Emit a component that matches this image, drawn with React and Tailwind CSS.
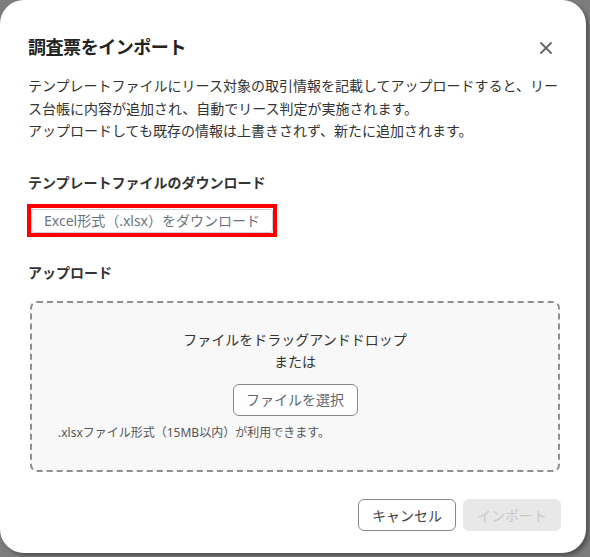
import React from 'react';

const font = { fontFamily: '"Noto Sans", "Noto Sans CJK JP", sans-serif' };

function CloseIcon() {
  return (
    <svg width="14" height="14" viewBox="0 0 14 14" fill="none">
      <path d="M2 2L12 12M12 2L2 12" stroke="#666" strokeWidth="1.8" strokeLinecap="round" />
    </svg>
  );
}

export default function App() {
  return (
    <div className="w-[590px] h-[557px] bg-[#7d7d7d] overflow-hidden" style={font}>
      <div className="w-[586px] h-[553px] bg-white rounded-[24px] shadow-[3px_3px_4px_rgba(0,0,0,0.35)] flex flex-col px-7 pt-[34px] pb-[22px] text-[#333]">
        {/* Header */}
        <div className="flex items-center justify-between h-[26px]">
          <h1 className="text-[18px] font-bold text-[#222] tracking-tight">調査票をインポート</h1>
          <button className="mr-[5px] mt-[2px]"><CloseIcon /></button>
        </div>

        {/* Description */}
        <div className="mt-[15px] text-[14px] leading-[22.5px] text-[#333]">
          <p>テンプレートファイルにリース対象の取引情報を記載してアップロードすると、リース台帳に内容が追加され、自動でリース判定が実施されます。</p>
          <p>アップロードしても既存の情報は上書きされず、新たに追加されます。</p>
        </div>

        {/* Template download */}
        <h2 className="mt-[30px] text-[14px] font-bold text-[#333] leading-[20px]">テンプレートファイルのダウンロード</h2>
        <div className="mt-[11px] self-start ml-[-1px] border-[4px] border-[#ff0000]">
          <button className="h-[24px] px-[12px] border border-[#d0d0d0] rounded-[3px] text-[14px] text-[#6a7480] leading-none bg-white">
            Excel形式（.xlsx）をダウンロード
          </button>
        </div>

        {/* Upload */}
        <h2 className="mt-[26px] text-[14px] font-bold text-[#333] leading-[20px]">アップロード</h2>
        <div className="mt-[18px] ml-[2px] mr-[-2px] h-[171px] border-2 border-dashed border-[#8f8f8f] rounded-[7px] bg-[#f8f8f8] flex flex-col">
          <div className="flex flex-col items-center pt-[26px]">
            <p className="text-[14px] leading-[22px] text-[#333]">ファイルをドラッグアンドドロップ</p>
            <p className="text-[14px] leading-[22px] text-[#333]">または</p>
            <button className="mt-[11px] w-[125px] h-[32px] bg-white border border-[#888] rounded-[6px] text-[14px] text-[#5f6670]">
              ファイルを選択
            </button>
          </div>
          <p className="mt-[9px] ml-[26px] text-[12px] text-[#555] leading-[16px]">.xlsxファイル形式（15MB以内）が利用できます。</p>
        </div>

        {/* Footer */}
        <div className="mt-auto flex justify-end gap-[7px] mr-[-3px]">
          <button className="w-[98px] h-[32px] bg-white border border-[#888] rounded-[6px] text-[14px] text-[#444]">キャンセル</button>
          <button className="w-[98px] h-[32px] bg-[#e8e8e8] rounded-[6px] text-[14px] text-[#c8c8c8]">インポート</button>
        </div>
      </div>
    </div>
  );
}
